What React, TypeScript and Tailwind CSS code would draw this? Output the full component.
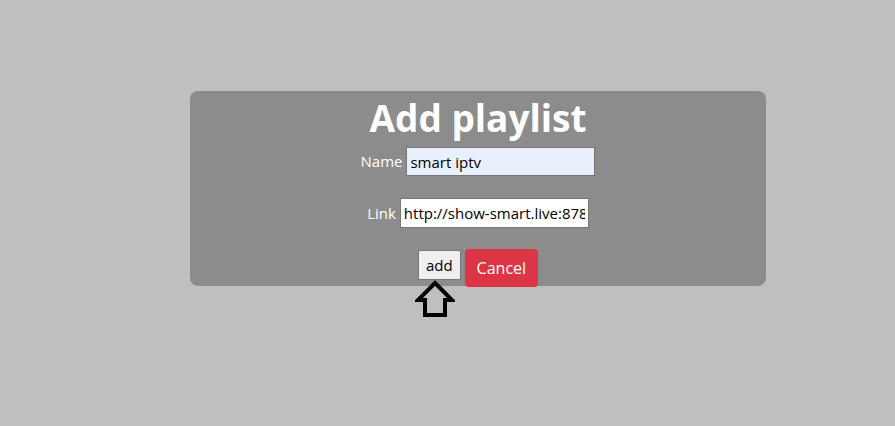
export default function App() {
  return (
    <div className="relative min-h-[426px] w-full bg-[#bfbfbf] pt-[91px] font-['Open_Sans',sans-serif]">
      <div className="ml-[190px] flex h-[195px] w-[576px] flex-col items-center rounded-lg bg-[#8c8c8c]">
        <h1 className="mt-[2px] text-[37px] font-bold leading-[50px] text-white">Add playlist</h1>

        <div className="mt-[4px] flex items-center gap-[4px]">
          <label className="text-[15px] text-white">Name</label>
          <input
            defaultValue="smart iptv"
            className="h-[29px] w-[189px] border border-[#767676] bg-[#e8f0fe] px-[3px] text-[15px] text-black outline-none"
          />
        </div>

        <div className="mt-[22px] flex items-center gap-[4px]">
          <label className="text-[15px] text-white">Link</label>
          <input
            defaultValue="http://show-smart.live:8789/get.php"
            className="h-[30px] w-[189px] border border-[#767676] bg-white px-[3px] text-[15px] text-black outline-none"
          />
        </div>

        <div className="mt-[21px] flex items-center gap-[4px]">
          <button className="mt-[-6px] h-[30px] rounded-[2px] border border-[#767676] bg-[#efefef] px-[7px] text-[15px] text-black">
            add
          </button>
          <button className="h-[38px] rounded-[4px] bg-[#dc3545] px-[12px] text-[16px] text-white">
            Cancel
          </button>
        </div>
      </div>

      <svg className="absolute left-[415px] top-[280px]" width="40" height="40" viewBox="0 0 40 40">
        <path
          d="M20 3 L37 20 L30 20 L30 35 L10 35 L10 20 L3 20 Z"
          fill="none"
          stroke="black"
          strokeWidth="4"
          strokeLinejoin="miter"
        />
      </svg>
    </div>
  )
}
